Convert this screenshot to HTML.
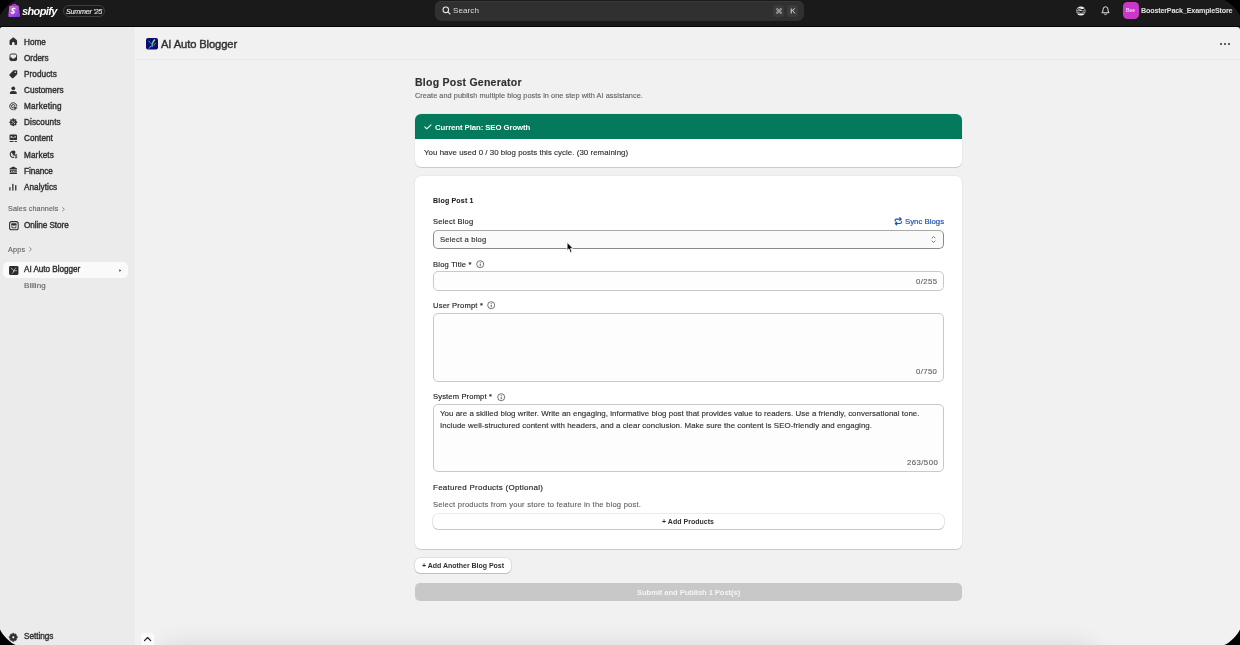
<!DOCTYPE html>
<html><head><meta charset="utf-8">
<style>
*{box-sizing:border-box;margin:0;padding:0}
html,body{width:1240px;height:645px;overflow:hidden;background:#000;font-family:"Liberation Sans",sans-serif}
#win{position:absolute;left:0;top:0;width:1240px;height:645px;overflow:hidden;background:#1a1a1a}
.a{position:absolute;white-space:nowrap;line-height:1;will-change:transform}
.s{position:absolute}
.ic{position:absolute;overflow:visible}
</style></head><body>
<div id="win">
  <!-- top bar -->
  <div class="s" style="left:0;top:0;width:1240px;height:26px;background:#1a1a1a"></div>
  <div class="s" style="left:0;top:26px;width:1240px;height:1px;background:#050505"></div>
  <!-- frame -->
  <div class="s" style="left:0;top:27px;width:1240px;height:618px;background:#f1f1f1;border-radius:3px 3px 0 0;overflow:hidden">
    <div class="s" style="left:0;top:0;width:134.7px;height:618px;background:#ebebeb"></div>
    <div class="s" style="left:134.7px;top:0;width:1.6px;height:618px;background:#f3f3f3"></div>
    <div class="s" style="left:160px;top:625px;width:935px;height:40px;border-radius:20px;box-shadow:0 0 24px 8px rgba(0,0,0,0.10)"></div>
  </div>

  <!-- shopify bag -->
  <svg class="ic" style="left:8px;top:3.6px" width="12.5" height="13.2" viewBox="0 0 25 26.4">
    <defs><linearGradient id="bag" x1="0" y1="0" x2="1" y2="1"><stop offset="0" stop-color="#e46ee6"/><stop offset="0.55" stop-color="#a94ee0"/><stop offset="1" stop-color="#6c34dc"/></linearGradient></defs>
    <path d="M8.5 4 Q9 0.8 12.5 0.6 Q16 0.8 16.5 4" stroke="#a24ad0" stroke-width="2.4" fill="none"/>
    <path d="M2.6 4.6 Q2.6 3.4 4 3.3 L20 2.8 Q21.2 2.8 21.4 4 L24.4 24.2 Q24.6 25.8 23 25.8 L2 25.8 Q0.4 25.8 0.6 24.2 Z" fill="url(#bag)"/>
    <path d="M13.6 9.4 Q11.6 8.2 9.6 9.2 Q7.6 10.6 9.2 12.8 L11.4 14.6 Q12.8 16.4 11 17.8 Q9.2 18.8 6.8 17.4" stroke="#fff" stroke-width="2.8" fill="none" stroke-linecap="round"/>
  </svg>
  <div class="s" style="left:62.5px;top:5px;width:42.5px;height:12px;border:1px solid #3e3e3e;border-radius:6px"></div>

  <!-- search -->
  <div class="s" style="left:434.7px;top:0.6px;width:369px;height:20.4px;background:#303030;border-radius:6.5px;box-shadow:inset 0 0.8px 0 #3d3d3d"></div>
  <svg class="ic" style="left:441.5px;top:6px" width="9" height="9" viewBox="0 0 18 18"><circle cx="7.6" cy="7.6" r="5.6" stroke="#e3e3e3" stroke-width="2.2" fill="none"/><path d="M11.8 11.8 L16 16" stroke="#e3e3e3" stroke-width="2.2" stroke-linecap="round"/></svg>
  <div class="s" style="left:773px;top:5px;width:11px;height:11.5px;background:#3b3b3b;border-radius:3px"></div>
  <div class="s" style="left:787px;top:5px;width:11px;height:11.5px;background:#3b3b3b;border-radius:3px"></div>
  <svg class="ic" style="left:775.5px;top:7.8px" width="6" height="6" viewBox="0 0 12 12"><path d="M4.2 4.2 H7.8 V7.8 H4.2 Z M4.2 4.2 V2.8 A1.6 1.6 0 1 0 2.8 4.2 H4.2 M7.8 4.2 V2.8 A1.6 1.6 0 1 1 9.2 4.2 H7.8 M4.2 7.8 V9.2 A1.6 1.6 0 1 1 2.8 7.8 H4.2 M7.8 7.8 V9.2 A1.6 1.6 0 1 0 9.2 7.8 H7.8" stroke="#d4d4d4" stroke-width="1.3" fill="none"/></svg>
  <svg class="ic" style="left:789.8px;top:8px" width="6" height="6" viewBox="0 0 12 12"><path d="M2.5 1 V11 M2.5 6.5 L9.5 1 M5 4.8 L10 11" stroke="#d0d0d0" stroke-width="2" fill="none"/></svg>

  <!-- right header icons -->
  <svg class="ic" style="left:1075.6px;top:5.9px" width="9.8" height="10" viewBox="0 0 20 20.4"><circle cx="10" cy="10.2" r="9.4" fill="#ececec"/><path d="M3 6.8 Q6 4.4 10 6.6 Q14 8.2 17.4 6.2 M2.2 10.4 H6.4 Q10 12.6 13.6 10.4 H17.8 M2.8 14.4 H7 Q10 12.8 13 14.4 H17.2" stroke="#1a1a1a" stroke-width="2.3" fill="none" stroke-linecap="round"/></svg>
  <svg class="ic" style="left:1101px;top:6.2px" width="9" height="9.5" viewBox="0 0 18 19"><path d="M9 1.5 Q4 1.5 4 7 V10 L1.8 13.5 H16.2 L14 10 V7 Q14 1.5 9 1.5 Z" stroke="#e3e3e3" stroke-width="2" fill="none" stroke-linejoin="round"/><path d="M6.5 16 Q9 18.5 11.5 16" stroke="#e3e3e3" stroke-width="2" fill="none"/></svg>
  <div class="s" style="left:1123px;top:2.3px;width:16px;height:16.7px;background:#cb36cb;border-radius:4.5px"></div>
  <div class="a" style="left:1126.4px;top:8.6px;font-size:4.8px;font-weight:bold;color:#f4d0f4">Bee</div>

  <!-- sidebar icons -->
  <svg class="ic" style="left:9.4px;top:37.20px" width="8.6" height="8.6" viewBox="0 0 16 16"><path d="M8 0.8 C8.5 0.8 8.9 1 9.3 1.3 L14.3 5.6 C14.8 6 15 6.6 15 7.2 V13.4 C15 14.3 14.3 15 13.4 15 H10.4 V11.6 C10.4 10.3 9.3 9.2 8 9.2 C6.7 9.2 5.6 10.3 5.6 11.6 V15 H2.6 C1.7 15 1 14.3 1 13.4 V7.2 C1 6.6 1.2 6 1.7 5.6 L6.7 1.3 C7.1 1 7.5 0.8 8 0.8 Z" fill="#303030"/></svg>
  <svg class="ic" style="left:9.4px;top:53.35px" width="8.6" height="8.6" viewBox="0 0 16 16"><rect x="1.9" y="1.9" width="12.2" height="12.2" rx="2.6" stroke="#303030" stroke-width="1.8" fill="none"/><path d="M1.5 8.2 H5.2 Q5.6 10.8 8 10.8 Q10.4 10.8 10.8 8.2 H14.5 V12 Q14.5 14.5 12 14.5 H4 Q1.5 14.5 1.5 12 Z" fill="#303030"/></svg>
  <svg class="ic" style="left:9.4px;top:69.50px" width="8.6" height="8.6" viewBox="0 0 16 16"><path d="M9 0.6 H13.6 C14.6 0.6 15.4 1.4 15.4 2.4 V7 C15.4 7.5 15.2 8 14.8 8.3 L8.3 14.8 C7.5 15.6 6.3 15.6 5.5 14.8 L1.2 10.5 C0.4 9.7 0.4 8.5 1.2 7.7 L7.7 1.2 C8 0.8 8.5 0.6 9 0.6 Z" fill="#303030"/><circle cx="11.7" cy="4.3" r="1.35" fill="#ebebeb"/></svg>
  <svg class="ic" style="left:9.4px;top:85.65px" width="8.6" height="8.6" viewBox="0 0 16 16"><circle cx="8" cy="4.4" r="3.5" fill="#303030"/><path d="M1.4 13.6 C1.4 10.4 4.4 9.4 8 9.4 C11.6 9.2 14.6 10.4 14.6 13.6 C14.6 14.4 14.1 14.9 13.4 14.9 H2.6 C1.9 14.9 1.4 14.4 1.4 13.6 Z" fill="#303030"/></svg>
  <svg class="ic" style="left:9.4px;top:101.80px" width="8.6" height="8.6" viewBox="0 0 16 16"><path d="M14.4 8.6 A6.5 6.5 0 1 0 8.6 14.4" stroke="#303030" stroke-width="1.8" fill="none"/><path d="M11.1 8.2 A3.2 3.2 0 1 0 8.2 11.1" stroke="#303030" stroke-width="1.8" fill="none"/><path d="M8.3 8.3 L15.5 11.1 L12.4 12.4 L11.1 15.5 Z" fill="#303030" stroke="#303030" stroke-width="0.6" stroke-linejoin="round"/></svg>
  <svg class="ic" style="left:9.4px;top:117.95px" width="8.6" height="8.6" viewBox="0 0 16 16"><path d="M15.55 8.00 L15.42 8.49 L15.06 8.93 L14.57 9.31 L14.06 9.62 L13.65 9.92 L13.40 10.24 L13.35 10.64 L13.43 11.14 L13.57 11.72 L13.65 12.34 L13.59 12.90 L13.34 13.34 L12.90 13.59 L12.34 13.65 L11.72 13.57 L11.14 13.43 L10.64 13.35 L10.24 13.40 L9.92 13.65 L9.62 14.06 L9.31 14.57 L8.93 15.06 L8.49 15.42 L8.00 15.55 L7.51 15.42 L7.07 15.06 L6.69 14.57 L6.38 14.06 L6.08 13.65 L5.76 13.40 L5.36 13.35 L4.86 13.43 L4.28 13.57 L3.66 13.65 L3.10 13.59 L2.66 13.34 L2.41 12.90 L2.35 12.34 L2.43 11.72 L2.57 11.14 L2.65 10.64 L2.60 10.24 L2.35 9.92 L1.94 9.62 L1.43 9.31 L0.94 8.93 L0.58 8.49 L0.45 8.00 L0.58 7.51 L0.94 7.07 L1.43 6.69 L1.94 6.38 L2.35 6.08 L2.60 5.76 L2.65 5.36 L2.57 4.86 L2.43 4.28 L2.35 3.66 L2.41 3.10 L2.66 2.66 L3.10 2.41 L3.66 2.35 L4.28 2.43 L4.86 2.57 L5.36 2.65 L5.76 2.60 L6.08 2.35 L6.38 1.94 L6.69 1.43 L7.07 0.94 L7.51 0.58 L8.00 0.45 L8.49 0.58 L8.93 0.94 L9.31 1.43 L9.62 1.94 L9.92 2.35 L10.24 2.60 L10.64 2.65 L11.14 2.57 L11.72 2.43 L12.34 2.35 L12.90 2.41 L13.34 2.66 L13.59 3.10 L13.65 3.66 L13.57 4.28 L13.43 4.86 L13.35 5.36 L13.40 5.76 L13.65 6.08 L14.06 6.38 L14.57 6.69 L15.06 7.07 L15.42 7.51 Z" fill="#303030"/><path d="M5.5 10.5 L10.5 5.5" stroke="#ebebeb" stroke-width="1.3" stroke-linecap="round"/><circle cx="5.9" cy="5.9" r="1.05" fill="#ebebeb"/><circle cx="10.1" cy="10.1" r="1.05" fill="#ebebeb"/></svg>
  <svg class="ic" style="left:9.4px;top:134.10px" width="8.6" height="8.6" viewBox="0 0 16 16"><rect x="1" y="1" width="14" height="10.4" rx="2.2" fill="#303030"/><path d="M3 4.6 Q4.5 3 6 4.6 L8.2 6.8 L10.2 4.8 Q11.6 3.6 13 4.8 V6.5 L10.2 6.2 L8.2 8.4 L6 6.2 L3 7.4 Z" fill="#ebebeb"/><rect x="1" y="13.2" width="7.6" height="1.7" rx="0.6" fill="#303030"/><rect x="10.2" y="13.2" width="4.8" height="1.7" rx="0.6" fill="#303030"/></svg>
  <svg class="ic" style="left:9.4px;top:150.25px" width="8.6" height="8.6" viewBox="0 0 16 16"><path d="M11.3 2 A6.8 6.8 0 1 0 9.6 14.6 L9.8 13 A5.4 5.4 0 0 1 4.2 4.6 Q6.8 5.6 6.6 8.2 Q9.4 8.8 8.8 12.6 L11 9.2 Q10.2 6.4 12.2 4.4 Z" fill="#303030"/><path d="M15.2 8.8 H12.9 Q11.5 8.8 11.5 10.2 Q11.5 11.5 12.9 11.5 H13.4 Q14.8 11.5 14.8 12.9 Q14.8 14.3 13.4 14.3 H11.1" stroke="#303030" stroke-width="1.5" fill="none"/><path d="M13.1 7.6 V15.6" stroke="#303030" stroke-width="1.2"/></svg>
  <svg class="ic" style="left:9.4px;top:166.40px" width="8.6" height="8.6" viewBox="0 0 16 16"><path d="M7.2 1.3 Q8 0.9 8.8 1.3 L14.4 4.3 Q15 4.7 15 5.3 V6.6 H1 V5.3 Q1 4.7 1.6 4.3 Z" fill="#303030"/><rect x="1.6" y="7.6" width="12.8" height="4.6" fill="#303030"/><rect x="4.2" y="8.8" width="1.6" height="2.2" fill="#ebebeb"/><rect x="7.2" y="8.8" width="1.6" height="2.2" fill="#ebebeb"/><rect x="10.2" y="8.8" width="1.6" height="2.2" fill="#ebebeb"/><rect x="1" y="12.8" width="14" height="2.3" rx="0.8" fill="#303030"/></svg>
  <svg class="ic" style="left:9.4px;top:182.55px" width="8.6" height="8.6" viewBox="0 0 16 16"><rect x="0.6" y="7.6" width="2.2" height="6.6" rx="0.9" fill="#303030"/><rect x="6" y="1.6" width="2.4" height="12.6" rx="1" fill="#303030"/><rect x="11.4" y="3.6" width="2.4" height="10.6" rx="1" fill="#303030"/></svg>
  <svg class="ic" style="left:61.6px;top:206.8px" width="3" height="4.6" viewBox="0 0 6 9"><path d="M1.2 1 L4.8 4.5 L1.2 8" stroke="#616161" stroke-width="1.4" fill="none" stroke-linecap="round" stroke-linejoin="round"/></svg>
  <svg class="ic" style="left:29.4px;top:247.2px" width="3" height="4.6" viewBox="0 0 6 9"><path d="M1.2 1 L4.8 4.5 L1.2 8" stroke="#616161" stroke-width="1.4" fill="none" stroke-linecap="round" stroke-linejoin="round"/></svg>
  <svg class="ic" style="left:8.5px;top:220.6px" width="9.8" height="9.3" viewBox="0 0 20 19"><rect x="1.2" y="1.2" width="17.6" height="16.6" rx="4.2" stroke="#303030" stroke-width="2.2" fill="none"/><path d="M5 4.8 H15 L15.8 8 Q15.8 9.6 14.2 9.6 Q12.6 9.6 12.6 8 Q12.6 9.6 10 9.6 Q7.4 9.6 7.4 8 Q7.4 9.6 5.8 9.6 Q4.2 9.6 4.2 8 Z" fill="#303030"/><path d="M6 10.5 V14 H14 V10.5" stroke="#303030" stroke-width="1.8" fill="none"/></svg>
  <div class="s" style="left:3.1px;top:262px;width:124.8px;height:16px;background:#fafafa;border-radius:5px"></div>
  <svg class="ic" style="left:8.8px;top:265.5px" width="9.5" height="8.9" viewBox="0 0 19 18"><rect x="0" y="0" width="19" height="18" rx="2.6" fill="#2c2c2c"/><path d="M4.2 4.5 Q8 6 9.5 10 M9.5 10 Q11 5.5 14 3.5 M10 10 Q12.5 9 15 9.5 M9.5 10.5 Q8.5 13.5 6.5 15" stroke="#c8c8c8" stroke-width="1.6" fill="none" stroke-linecap="round"/></svg>
  <svg class="ic" style="left:119px;top:268.6px" width="2.6" height="3" viewBox="0 0 5 6"><path d="M0.5 0.5 L4.5 3 L0.5 5.5 Z" fill="#303030"/></svg>
  <svg class="ic" style="left:9.4px;top:632.6px" width="8.6" height="8.6" viewBox="0 0 16 16"><path d="M6.6 0.4 H9.4 L10 2.6 L12.2 1.6 L14.2 3.6 L13.4 5.8 L15.6 6.6 V9.4 L13.4 10.2 L14.2 12.4 L12.2 14.4 L10 13.4 L9.4 15.6 H6.6 L6 13.4 L3.8 14.4 L1.8 12.4 L2.6 10.2 L0.4 9.4 V6.6 L2.6 5.8 L1.8 3.6 L3.8 1.6 L6 2.6 Z" fill="#303030" stroke="#303030" stroke-width="0.8" stroke-linejoin="round"/><circle cx="8" cy="8" r="2.1" fill="#ebebeb"/></svg>

  <!-- main header -->
  <div class="s" style="left:134.7px;top:59.2px;width:1106px;height:0.9px;background:#e9e9e9"></div>
  <svg class="ic" style="left:146px;top:38.3px" width="12" height="11.6" viewBox="0 0 24 23.2">
    <defs><linearGradient id="fe" x1="0" y1="0" x2="0" y2="1"><stop offset="0" stop-color="#c8e85a"/><stop offset="0.5" stop-color="#34d0a0"/><stop offset="1" stop-color="#22a8f0"/></linearGradient></defs>
    <rect x="0" y="0" width="24" height="23.2" rx="4" fill="#0a0f6e"/>
    <path d="M5 6.2 Q9 8.5 12 12.5" stroke="#2c8ef0" stroke-width="2" fill="none" stroke-linecap="round"/>
    <path d="M17 4 Q12.5 8 12.2 17" stroke="url(#fe)" stroke-width="2.8" fill="none" stroke-linecap="round"/>
    <path d="M19 10.5 Q17 12 16.2 14.5" stroke="#e06a3a" stroke-width="1.8" fill="none" stroke-linecap="round"/>
    <path d="M9.5 16.5 Q7.5 18.8 6.4 20.6" stroke="#b890f0" stroke-width="2" fill="none" stroke-linecap="round"/>
  </svg>
  <div class="s" style="left:1220.3px;top:43.4px;width:1.7px;height:1.7px;background:#303030;border-radius:1px"></div>
  <div class="s" style="left:1224.3px;top:43.4px;width:1.7px;height:1.7px;background:#303030;border-radius:1px"></div>
  <div class="s" style="left:1228.3px;top:43.4px;width:1.7px;height:1.7px;background:#303030;border-radius:1px"></div>

  <!-- plan card -->
  <div class="s" style="left:414.5px;top:113.5px;width:547.8px;height:53.2px;background:#fff;border-radius:6px;overflow:hidden;box-shadow:0 1px 0 rgba(0,0,0,.13),0 0 0 0.5px rgba(0,0,0,.06)">
    <div class="s" style="left:0;top:0;width:100%;height:25.2px;background:#047a5c"></div>
  </div>
  <svg class="ic" style="left:423.6px;top:124.3px" width="7.8" height="5.6" viewBox="0 0 15 10.8"><path d="M1.5 5.6 L5.2 9.2 L13.5 1.5" stroke="#fff" stroke-width="2" fill="none" stroke-linecap="round" stroke-linejoin="round"/></svg>

  <!-- form card -->
  <div class="s" style="left:414.5px;top:176.3px;width:547.8px;height:372.3px;background:#fff;border-radius:6px;box-shadow:0 1px 0 rgba(0,0,0,.13),0 0 0 0.5px rgba(0,0,0,.06)"></div>
  <svg class="ic" style="left:893.6px;top:216.6px" width="8.6" height="8.6" viewBox="0 0 17 17"><path d="M2.3 8.2 V6.6 Q2.3 4.1 4.8 4.1 H14.2 M11.4 1.2 L14.4 4.1 L11.4 7" stroke="#1d52b0" stroke-width="2.2" fill="none" stroke-linecap="round" stroke-linejoin="round"/><path d="M14.7 8.8 V10.4 Q14.7 12.9 12.2 12.9 H2.8 M5.6 10 L2.6 12.9 L5.6 15.8" stroke="#1d52b0" stroke-width="2.2" fill="none" stroke-linecap="round" stroke-linejoin="round"/></svg>

  <!-- select -->
  <div class="s" style="left:433px;top:229.8px;width:510.8px;height:19.2px;background:#fafafa;border:0.9px solid #8a8a8a;border-top-color:#a9a9a9;border-radius:5px"></div>
  <svg class="ic" style="left:930.5px;top:234.5px" width="5" height="9" viewBox="0 0 10 18"><path d="M2 6 L5 3 L8 6 M2 12 L5 15 L8 12" stroke="#4a4a4a" stroke-width="1.5" fill="none" stroke-linecap="round" stroke-linejoin="round"/></svg>

  <!-- fields -->
  <div class="s" style="left:433px;top:271.3px;width:510.8px;height:19.4px;background:#fdfdfd;border:1px solid #c9c9c9;border-radius:5px"></div>
  <div class="s" style="left:433px;top:312.8px;width:510.8px;height:68.8px;background:#fdfdfd;border:1px solid #c9c9c9;border-radius:5px"></div>
  <div class="s" style="left:433px;top:404.2px;width:510.8px;height:68.2px;background:#fdfdfd;border:1px solid #c9c9c9;border-radius:5px"></div>
  <svg class="ic" style="left:475.8px;top:260.1px" width="8.4" height="8.4" viewBox="0 0 16 16"><circle cx="8" cy="8" r="6.7" stroke="#3a3a3a" stroke-width="1.35" fill="none"/><rect x="7.25" y="6.9" width="1.5" height="5" rx="0.5" fill="#3a3a3a"/><circle cx="8" cy="4.7" r="0.95" fill="#3a3a3a"/></svg>
  <svg class="ic" style="left:486.6px;top:301.40000000000003px" width="8.4" height="8.4" viewBox="0 0 16 16"><circle cx="8" cy="8" r="6.7" stroke="#3a3a3a" stroke-width="1.35" fill="none"/><rect x="7.25" y="6.9" width="1.5" height="5" rx="0.5" fill="#3a3a3a"/><circle cx="8" cy="4.7" r="0.95" fill="#3a3a3a"/></svg>
  <svg class="ic" style="left:496.7px;top:392.8px" width="8.4" height="8.4" viewBox="0 0 16 16"><circle cx="8" cy="8" r="6.7" stroke="#3a3a3a" stroke-width="1.35" fill="none"/><rect x="7.25" y="6.9" width="1.5" height="5" rx="0.5" fill="#3a3a3a"/><circle cx="8" cy="4.7" r="0.95" fill="#3a3a3a"/></svg>

  <!-- buttons -->
  <div class="s" style="left:433px;top:513.6px;width:510.8px;height:15.9px;background:#fff;border-radius:5px;box-shadow:0 0 0 0.6px rgba(0,0,0,.16),0 1px 0 rgba(0,0,0,.14)"></div>
  <div class="s" style="left:414.6px;top:557.7px;width:96.1px;height:15.8px;background:#fff;border-radius:5px;box-shadow:0 0 0 0.6px rgba(0,0,0,.14),0 1px 0 rgba(0,0,0,.14)"></div>
  <div class="s" style="left:414.6px;top:583.3px;width:547.7px;height:17.3px;background:#c8c8c8;border-radius:5px"></div>

  <!-- scroll top button -->
  <div class="s" style="left:141px;top:632.8px;width:12.9px;height:14px;background:#fbfbfb;border-radius:4px"></div>
  <svg class="ic" style="left:144px;top:637px" width="7.2" height="4.2" viewBox="0 0 14 8"><path d="M1 7 L7 1 L13 7" stroke="#1e1e1e" stroke-width="2.4" fill="none" stroke-linecap="round" stroke-linejoin="round"/></svg>

  <!-- cursor -->
  <svg class="ic" style="left:565px;top:240.5px" width="10" height="13" viewBox="0 0 10 13"><path d="M2.1 1.5 V9.5 L4 7.8 L5.3 11.6 L6.9 11 L5.6 7.3 L8 7.2 Z" fill="#000" stroke="#fff" stroke-width="0.8" stroke-linejoin="round"/></svg>

  <div class="a" id="t0" style="left:21.75px;top:5.79px;font-size:11px;color:#ffffff;font-weight:bold;letter-spacing:-0.625px;font-style:italic">shopify</div>
  <div class="a" id="t1" style="left:65.75px;top:7.71px;font-size:7.2px;color:#e3e3e3;font-weight:normal;letter-spacing:-0.250px;-webkit-text-stroke:0.15px #e3e3e3;font-style:italic">Summer &#x27;25</div>
  <div class="a" id="t2" style="left:452.90px;top:6.83px;font-size:8px;color:#dedede;font-weight:normal;letter-spacing:0.110px;">Search</div>
  <div class="a" id="t3" style="left:1141.30px;top:7.01px;font-size:7.2px;color:#e3e3e3;font-weight:bold;letter-spacing:-0.185px;">BoosterPack_ExampleStore</div>
  <div class="a" id="t4" style="left:23.50px;top:38.56px;font-size:8.2px;color:#303030;font-weight:normal;letter-spacing:-0.017px;-webkit-text-stroke:0.38px #303030;">Home</div>
  <div class="a" id="t5" style="left:23.75px;top:54.71px;font-size:8.2px;color:#303030;font-weight:normal;letter-spacing:-0.090px;-webkit-text-stroke:0.38px #303030;">Orders</div>
  <div class="a" id="t6" style="left:23.50px;top:70.86px;font-size:8.2px;color:#303030;font-weight:normal;letter-spacing:0.064px;-webkit-text-stroke:0.38px #303030;">Products</div>
  <div class="a" id="t7" style="left:23.75px;top:87.01px;font-size:8.2px;color:#303030;font-weight:normal;letter-spacing:-0.006px;-webkit-text-stroke:0.38px #303030;">Customers</div>
  <div class="a" id="t8" style="left:23.50px;top:103.16px;font-size:8.2px;color:#303030;font-weight:normal;letter-spacing:0.188px;-webkit-text-stroke:0.38px #303030;">Marketing</div>
  <div class="a" id="t9" style="left:23.50px;top:119.31px;font-size:8.2px;color:#303030;font-weight:normal;letter-spacing:0.088px;-webkit-text-stroke:0.38px #303030;">Discounts</div>
  <div class="a" id="t10" style="left:23.75px;top:135.46px;font-size:8.2px;color:#303030;font-weight:normal;letter-spacing:0.033px;-webkit-text-stroke:0.38px #303030;">Content</div>
  <div class="a" id="t11" style="left:23.50px;top:151.61px;font-size:8.2px;color:#303030;font-weight:normal;letter-spacing:0.117px;-webkit-text-stroke:0.38px #303030;">Markets</div>
  <div class="a" id="t12" style="left:23.50px;top:167.76px;font-size:8.2px;color:#303030;font-weight:normal;letter-spacing:-0.050px;-webkit-text-stroke:0.38px #303030;">Finance</div>
  <div class="a" id="t13" style="left:24.25px;top:183.91px;font-size:8.2px;color:#303030;font-weight:normal;letter-spacing:0.050px;-webkit-text-stroke:0.38px #303030;">Analytics</div>
  <div class="a" id="t14" style="left:7.50px;top:205.21px;font-size:7.2px;color:#616161;font-weight:normal;letter-spacing:0.127px;-webkit-text-stroke:0.12px #616161;">Sales channels</div>
  <div class="a" id="t15" style="left:23.75px;top:222.06px;font-size:8.2px;color:#303030;font-weight:normal;letter-spacing:-0.073px;-webkit-text-stroke:0.38px #303030;">Online Store</div>
  <div class="a" id="t16" style="left:7.75px;top:245.81px;font-size:7.2px;color:#616161;font-weight:normal;letter-spacing:0.250px;-webkit-text-stroke:0.12px #616161;">Apps</div>
  <div class="a" id="t17" style="left:24.25px;top:266.46px;font-size:8.2px;color:#303030;font-weight:normal;letter-spacing:-0.046px;-webkit-text-stroke:0.38px #303030;">AI Auto Blogger</div>
  <div class="a" id="t18" style="left:24.00px;top:282.03px;font-size:8px;color:#616161;font-weight:normal;letter-spacing:0.050px;-webkit-text-stroke:0.12px #616161;">Billing</div>
  <div class="a" id="t19" style="left:24.15px;top:633.26px;font-size:8.2px;color:#303030;font-weight:normal;letter-spacing:-0.021px;-webkit-text-stroke:0.38px #303030;">Settings</div>
  <div class="a" id="t20" style="left:160.95px;top:38.82px;font-size:11.2px;color:#303030;font-weight:normal;letter-spacing:-0.114px;-webkit-text-stroke:0.4px #303030;">AI Auto Blogger</div>
  <div class="a" id="t21" style="left:414.50px;top:76.91px;font-size:10.5px;color:#303030;font-weight:bold;letter-spacing:0.250px;-webkit-text-stroke:0.15px #303030;">Blog Post Generator</div>
  <div class="a" id="t22" style="left:414.75px;top:92.22px;font-size:7.3px;color:#616161;font-weight:normal;letter-spacing:0.062px;-webkit-text-stroke:0.12px #616161;">Create and publish multiple blog posts in one step with AI assistance.</div>
  <div class="a" id="t23" style="left:435.15px;top:123.60px;font-size:7.8px;color:#ffffff;font-weight:bold;letter-spacing:-0.093px;">Current Plan: SEO Growth</div>
  <div class="a" id="t24" style="left:424.20px;top:149.01px;font-size:7.9px;color:#303030;font-weight:normal;letter-spacing:0.039px;-webkit-text-stroke:0.14px #303030;">You have used 0 / 30 blog posts this cycle. (30 remaining)</div>
  <div class="a" id="t25" style="left:433.00px;top:197.27px;font-size:7px;color:#222222;font-weight:bold;letter-spacing:0.200px;-webkit-text-stroke:0.08px #222222;">Blog Post 1</div>
  <div class="a" id="t26" style="left:433.25px;top:218.15px;font-size:7.5px;color:#222222;font-weight:normal;letter-spacing:0.225px;-webkit-text-stroke:0.14px #222222;">Select Blog</div>
  <div class="a" id="t27" style="left:904.85px;top:218.10px;font-size:7.8px;color:#1d52b0;font-weight:normal;letter-spacing:0.011px;-webkit-text-stroke:0.2px #1d52b0;">Sync Blogs</div>
  <div class="a" id="t28" style="left:439.75px;top:236.17px;font-size:7.6px;color:#303030;font-weight:normal;letter-spacing:0.196px;-webkit-text-stroke:0.14px #303030;">Select a blog</div>
  <div class="a" id="t29" style="left:432.50px;top:260.57px;font-size:7.6px;color:#222222;font-weight:normal;letter-spacing:0.205px;-webkit-text-stroke:0.14px #222222;">Blog Title *</div>
  <div class="a" id="t30" style="left:916.25px;top:277.80px;font-size:7.8px;color:#616161;font-weight:normal;letter-spacing:0.375px;-webkit-text-stroke:0.12px #616161;">0/255</div>
  <div class="a" id="t31" style="left:432.50px;top:302.17px;font-size:7.6px;color:#222222;font-weight:normal;letter-spacing:0.179px;-webkit-text-stroke:0.14px #222222;">User Prompt *</div>
  <div class="a" id="t32" style="left:916.45px;top:368.20px;font-size:7.8px;color:#616161;font-weight:normal;letter-spacing:0.350px;-webkit-text-stroke:0.12px #616161;">0/750</div>
  <div class="a" id="t33" style="left:432.75px;top:393.07px;font-size:7.6px;color:#222222;font-weight:normal;letter-spacing:0.139px;-webkit-text-stroke:0.14px #222222;">System Prompt *</div>
  <div class="a" id="t34" style="left:440.30px;top:409.71px;font-size:7.9px;color:#303030;font-weight:normal;letter-spacing:0.036px;-webkit-text-stroke:0.14px #303030;">You are a skilled blog writer. Write an engaging, informative blog post that provides value to readers. Use a friendly, conversational tone.</div>
  <div class="a" id="t35" style="left:439.55px;top:421.61px;font-size:7.9px;color:#303030;font-weight:normal;letter-spacing:0.047px;-webkit-text-stroke:0.14px #303030;">Include well-structured content with headers, and a clear conclusion. Make sure the content is SEO-friendly and engaging.</div>
  <div class="a" id="t36" style="left:906.55px;top:459.40px;font-size:7.8px;color:#616161;font-weight:normal;letter-spacing:0.425px;-webkit-text-stroke:0.12px #616161;">263/500</div>
  <div class="a" id="t37" style="left:432.80px;top:483.73px;font-size:8px;color:#222222;font-weight:normal;letter-spacing:0.250px;-webkit-text-stroke:0.14px #222222;">Featured Products (Optional)</div>
  <div class="a" id="t38" style="left:433.05px;top:500.57px;font-size:7.6px;color:#616161;font-weight:normal;letter-spacing:0.212px;-webkit-text-stroke:0.12px #616161;">Select products from your store to feature in the blog post.</div>
  <div class="a" id="t39" style="left:662.45px;top:518.37px;font-size:7px;color:#303030;font-weight:bold;letter-spacing:0.023px;">+ Add Products</div>
  <div class="a" id="t40" style="left:421.85px;top:562.17px;font-size:7px;color:#303030;font-weight:bold;letter-spacing:-0.020px;">+ Add Another Blog Post</div>
  <div class="a" id="t41" style="left:636.65px;top:588.97px;font-size:7.6px;color:#f4f4f4;font-weight:bold;letter-spacing:-0.070px;">Submit and Publish 1 Post(s)</div>

  <!-- window corners -->
  <svg class="ic" style="left:0;top:0" width="17" height="17" viewBox="0 0 17 17"><path d="M0 0 H15.6 C10 2.5 2.5 10 0 15.6 Z" fill="#000"/></svg>
  <svg class="ic" style="left:1223px;top:0" width="17" height="17" viewBox="0 0 17 17"><path d="M17 0 H1.4 C7 2.5 14.5 10 17 15.6 Z" fill="#000"/></svg>
  <svg class="ic" style="left:0;top:628px" width="17" height="17" viewBox="0 0 17 17"><path d="M0 17 H15.6 C10 14.5 2.5 7 0 1.4 Z" fill="#000"/></svg>
  <svg class="ic" style="left:1223px;top:628px" width="17" height="17" viewBox="0 0 17 17"><path d="M17 17 H1.4 C7 14.5 14.5 7 17 1.4 Z" fill="#000"/></svg>
</div>
</body></html>
